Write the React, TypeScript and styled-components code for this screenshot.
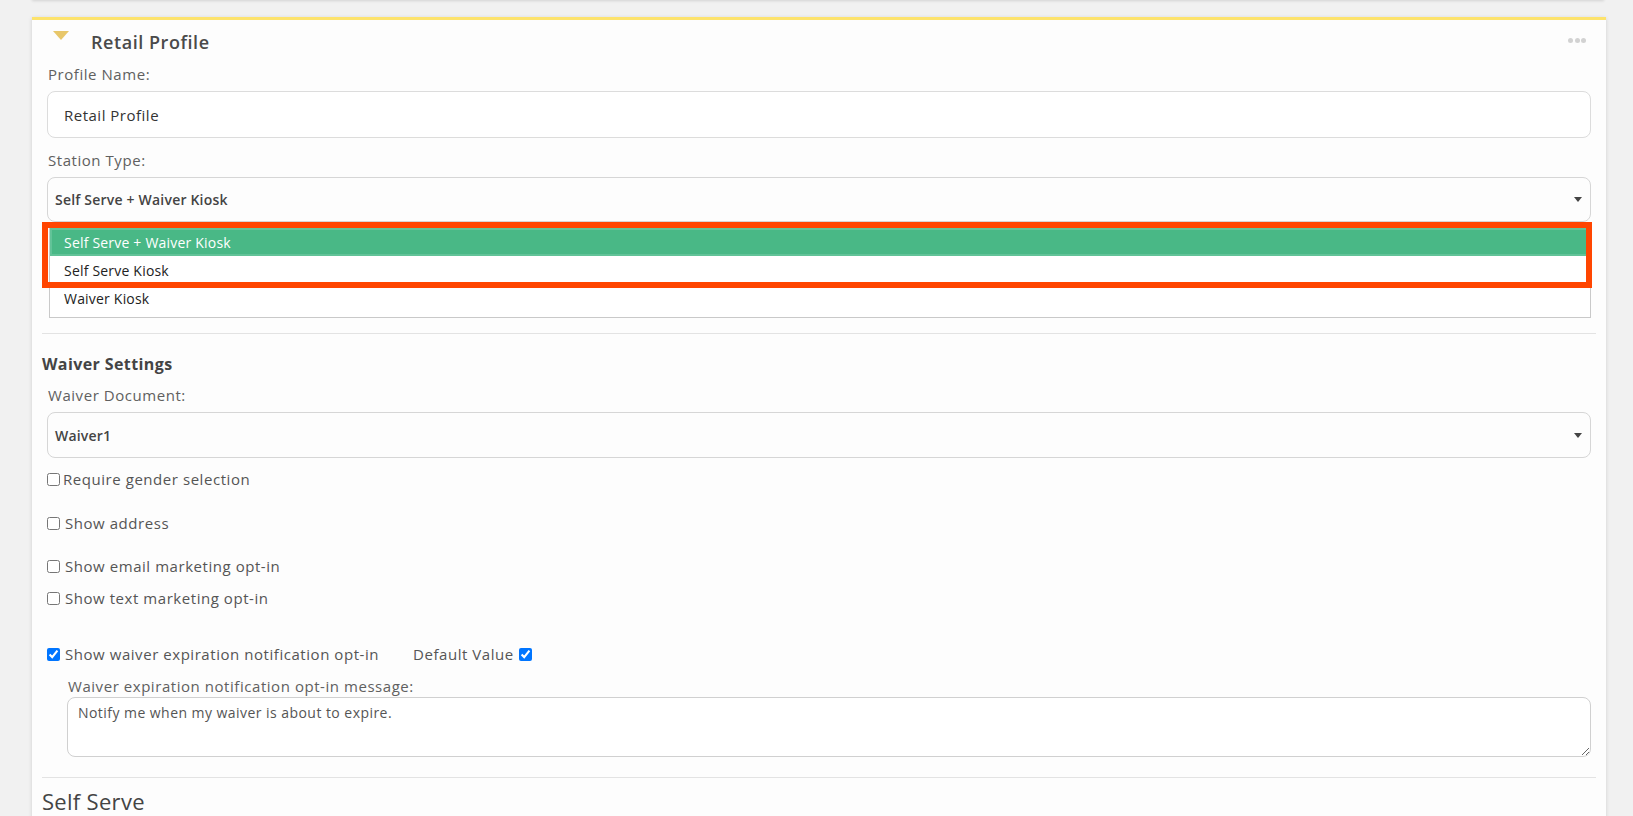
import React from "react";
import styled, { createGlobalStyle } from "styled-components";

const GlobalStyle = createGlobalStyle`
  html, body { margin: 0; padding: 0; background: #f1f1f1; }
  body { font-family: "Open Sans", "Liberation Sans", sans-serif; }
  * { box-sizing: border-box; }
`;

const Page = styled.div`
  padding: 0 27px 40px 32px;
`;

const TopCard = styled.div`
  height: 4px;
  margin-top: -4px;
  margin-right: 2px;
  background: #fdfdfd;
  box-shadow: 0 1px 3px rgba(0, 0, 0, 0.13);
`;

const Card = styled.section`
  margin-top: 17px;
  border-top: 3px solid #fde36c;
  background: #fdfdfd;
  box-shadow: 0 1px 4px rgba(0, 0, 0, 0.14);
  padding: 0 10px 30px 10px;
`;

const Header = styled.div`
  display: flex;
  align-items: center;
  padding: 10px 0;
  line-height: 24px;
`;

const Caret = styled.svg`
  align-self: flex-start;
  margin: 1px 22px 0 11px;
  flex: none;
`;

const Title = styled.h2`
  margin: 0;
  font-size: 18px;
  font-weight: 600;
  color: #4a4a4a;
  letter-spacing: 0.55px;
`;

const Dots = styled.div`
  margin-left: auto;
  margin-right: 10px;
  align-self: flex-start;
  margin-top: 8px;
  display: flex;
  gap: 1.5px;
`;

const Dot = styled.span`
  width: 5px;
  height: 5px;
  border-radius: 50%;
  background: #d2d2d2;
`;

const FieldGroup = styled.div`
  padding: 0 5px;
`;

const Label = styled.label<{ $mt?: number; $indent?: number }>`
  display: block;
  margin-top: ${(p) => p.$mt ?? 0}px;
  padding-left: ${(p) => p.$indent ?? 1}px;
  font-size: 15px;
  line-height: 20px;
  color: #606060;
  letter-spacing: 0.55px;
`;

const TextInput = styled.input`
  display: block;
  width: 100%;
  height: 47px;
  margin-top: 7px;
  border: 1px solid #dcdcdc;
  border-radius: 8px;
  padding: 0 16px;
  background: #fff;
  font-family: inherit;
  font-size: 15px;
  color: #333;
  letter-spacing: 0.5px;
  outline: none;
`;

const SelectWrap = styled.div<{ $mb?: number }>`
  position: relative;
  margin-top: 7px;
  margin-bottom: ${(p) => p.$mb ?? 0}px;
`;

const SelectBox = styled.div<{ $h: number }>`
  display: flex;
  align-items: center;
  height: ${(p) => p.$h}px;
  border: 1px solid #d6d6d6;
  border-radius: 8px;
  padding: 0 8px 0 7px;
  background: #fdfdfd;
  font-size: 14px;
  font-weight: 600;
  color: #444;
  letter-spacing: 0.2px;
`;

const SelectValue = styled.span`
  flex: 1;
`;

const OptionList = styled.ul`
  position: absolute;
  top: calc(100% + 2px);
  left: 2px;
  right: 0;
  margin: 0;
  padding: 3px 0 5px;
  list-style: none;
  background: #fff;
  border: 1px solid #c9c9c9;
  z-index: 2;
  font-family: "Open Sans", "Liberation Sans", sans-serif;
  font-size: 14px;
  letter-spacing: 0.2px;
`;

const OptionItem = styled.li<{ $selected?: boolean }>`
  height: 28px;
  display: flex;
  align-items: center;
  padding-left: 14px;
  color: ${(p) => (p.$selected ? "#fff" : "#222")};
  background: ${(p) => (p.$selected ? "#49b886" : "transparent")};
  box-shadow: ${(p) => (p.$selected ? "inset 0 0 0 2px #62c398" : "none")};
`;

const Highlight = styled.div`
  position: absolute;
  top: 100%;
  left: -5px;
  right: -1px;
  height: 66px;
  border: 6px solid #ff4500;
  z-index: 3;
  pointer-events: none;
`;

const Divider = styled.hr<{ $mt: number }>`
  margin: ${(p) => p.$mt}px 0 0;
  border: 0;
  height: 1px;
  background: #e3e3e3;
`;

const SectionTitle = styled.h3`
  margin: 18px 0 0;
  font-size: 16px;
  line-height: 24px;
  font-weight: 700;
  color: #444;
  letter-spacing: 0.4px;
`;

const CheckRow = styled.div<{ $mt: number }>`
  display: flex;
  align-items: center;
  margin-top: ${(p) => p.$mt}px;
  font-size: 15px;
  line-height: 20px;
  color: #555;
  letter-spacing: 0.55px;
`;

const Check = styled.input<{ $gap: number; $ml?: number }>`
  width: 13px;
  height: 13px;
  margin: 0 ${(p) => p.$gap}px 0 ${(p) => p.$ml ?? 0}px;
  flex: none;
`;

const Inline = styled.span<{ $ml: number }>`
  display: inline-flex;
  align-items: center;
  margin-left: ${(p) => p.$ml}px;
`;

const SubField = styled.div`
  padding-left: 20px;
`;

const TextArea = styled.textarea`
  display: block;
  width: 100%;
  height: 60px;
  margin-top: 1px;
  border: 1px solid #d0d0d0;
  border-radius: 8px;
  padding: 5px 10px;
  background: #fff;
  font-family: inherit;
  font-size: 14px;
  line-height: 20px;
  color: #555;
  letter-spacing: 0.45px;
  resize: vertical;
  outline: none;
`;

const BigTitle = styled.h3`
  margin: 8px 0 0;
  font-size: 22px;
  line-height: 30px;
  font-weight: 400;
  color: #444;
  letter-spacing: 0.3px;
`;

const Arrow = () => (
  <svg width="8" height="5" viewBox="0 0 8 5">
    <path d="M0 0 H8 L4 5 Z" fill="#444" />
  </svg>
);

export default function App() {
  return (
    <>
      <GlobalStyle />
      <Page>
        <TopCard />
        <Card>
          <Header>
            <Caret width="16" height="9" viewBox="0 0 16 9">
              <path d="M0 0 H16 L8 9 Z" fill="#e8c76a" />
            </Caret>
            <Title>Retail Profile</Title>
            <Dots>
              <Dot />
              <Dot />
              <Dot />
            </Dots>
          </Header>

          <FieldGroup>
            <Label>Profile Name:</Label>
            <TextInput defaultValue="Retail Profile" />

            <Label $mt={12}>Station Type:</Label>
            <SelectWrap $mb={111}>
              <SelectBox $h={45}>
                <SelectValue>Self Serve + Waiver Kiosk</SelectValue>
                <Arrow />
              </SelectBox>
              <OptionList>
                <OptionItem $selected>Self Serve + Waiver Kiosk</OptionItem>
                <OptionItem>Self Serve Kiosk</OptionItem>
                <OptionItem>Waiver Kiosk</OptionItem>
              </OptionList>
              <Highlight />
            </SelectWrap>
          </FieldGroup>

          <Divider $mt={0} />
          <SectionTitle>Waiver Settings</SectionTitle>

          <FieldGroup>
            <Label $mt={9}>Waiver Document:</Label>
            <SelectWrap>
              <SelectBox $h={46}>
                <SelectValue>Waiver1</SelectValue>
                <Arrow />
              </SelectBox>
            </SelectWrap>

            <CheckRow $mt={11}>
              <Check type="checkbox" $gap={3} />
              Require gender selection
            </CheckRow>
            <CheckRow $mt={24}>
              <Check type="checkbox" $gap={5} />
              Show address
            </CheckRow>
            <CheckRow $mt={23}>
              <Check type="checkbox" $gap={5} />
              Show email marketing opt-in
            </CheckRow>
            <CheckRow $mt={12}>
              <Check type="checkbox" $gap={5} />
              Show text marketing opt-in
            </CheckRow>
            <CheckRow $mt={36}>
              <Check type="checkbox" $gap={5} defaultChecked />
              Show waiver expiration notification opt-in
              <Inline $ml={34}>
                Default Value
                <Check type="checkbox" $gap={0} $ml={5} defaultChecked />
              </Inline>
            </CheckRow>

            <SubField>
              <Label $mt={12}>Waiver expiration notification opt-in message:</Label>
              <TextArea defaultValue="Notify me when my waiver is about to expire." />
            </SubField>
          </FieldGroup>

          <Divider $mt={20} />
          <BigTitle>Self Serve</BigTitle>
        </Card>
      </Page>
    </>
  );
}
